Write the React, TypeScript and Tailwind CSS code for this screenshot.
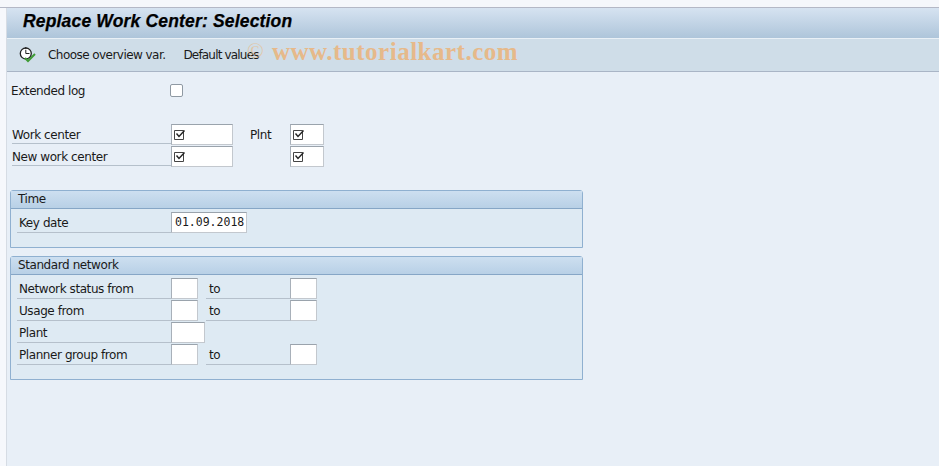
const sans = "font-['Tahoma','DejaVu_Sans',sans-serif] text-[12px] tracking-[-0.42px] text-[#1a1a1a]";

function Label({ w, children, className = "" }: { w: string; children?: React.ReactNode; className?: string }) {
  return (
    <div className={`${w} h-[20px] border-b border-[#b5c0cb] leading-[18px] whitespace-nowrap ${className}`}>{children}</div>
  );
}

function Field({ w, children, className = "" }: { w: string; children?: React.ReactNode; className?: string }) {
  return (
    <div className={`${w} h-[21px] bg-white border border-[#c3c8ce] border-t-[#9aa3ac] border-l-[#a8b0b9] flex items-center shrink-0 ${className}`}>
      {children}
    </div>
  );
}

function Check() {
  return (
    <svg width="14" height="14" viewBox="0 0 14 14" className="ml-[1px]">
      <path d="M1.5 2.5H10.5V11.5H1.5Z" fill="none" stroke="#444" strokeWidth="1" />
      <path d="M3.5 5.5L6 8.5L11.5 2.5" fill="none" stroke="#222" strokeWidth="1.4" />
    </svg>
  );
}

function Group({ title, h, children }: { title: string; h: string; children: React.ReactNode }) {
  return (
    <div className={`w-[573px] ${h} border border-[#8fb0d0] rounded-t-[3px] bg-[#deeaf3] flex flex-col`}>
      <div className="h-[18px] shrink-0 border-b border-[#86a6c6] bg-gradient-to-b from-[#cddff0] to-[#b8d0e6] pl-[7px] leading-[16px]">
        {title}
      </div>
      {children}
    </div>
  );
}

function RangeRow({ label, to = true, wide = false }: { label: string; to?: boolean; wide?: boolean }) {
  return (
    <div className="h-[22px] flex items-start pl-[6px]">
      <Label w="w-[154px]" className="pt-[2px] pl-[2px] h-[21px]">{label}</Label>
      <Field w={wide ? "w-[34px]" : "w-[27px]"} />
      {to && (
        <>
          <Label w="w-[84px]" className="ml-[8px] pt-[2px] h-[21px] pl-[3px]">to</Label>
          <Field w="w-[27px]" />
        </>
      )}
    </div>
  );
}

export default function App() {
  return (
    <div className={`w-[939px] h-[466px] overflow-hidden bg-[#f6f8fc] flex flex-col ${sans}`}>
      <div className="h-[8px] shrink-0 bg-[#f5f7fb] border-b border-[#b4b8c6]" />
      <div className="flex-1 flex min-h-0">
        <div className="w-[6px] shrink-0" />
        <div className="flex-1 flex flex-col border-l border-[#d6dce4] bg-[#e8eff7]">
          <div className="h-[31px] shrink-0 border-b border-[#e9f0f6] bg-gradient-to-b from-[#d6e3f1] to-[#aec5da] pl-[16px] font-['Liberation_Sans',sans-serif] font-bold italic text-[17.5px] tracking-[0.17px] leading-[27px] [-webkit-text-stroke:0.25px_black] text-black">
            Replace Work Center: Selection
          </div>
          <div className="relative h-[33px] shrink-0 bg-[#cfdde8] border-b border-[#a9b5c6] flex items-center pl-[12px] pb-[1px]">
            <svg width="18" height="18" viewBox="0 0 18 18" className="mr-[11px] shrink-0">
              <circle cx="6.8" cy="7.5" r="5.5" fill="#fff" stroke="#222" strokeWidth="1.3" />
              <path d="M6.8 1V3M6.8 3.8V7.5H10.5" fill="none" stroke="#222" strokeWidth="1" />
              <path d="M6 12L9 15L16 8" fill="none" stroke="#3f9b35" strokeWidth="2" />
            </svg>
            <span className="tracking-[-0.55px]">Choose overview var.</span>
            <span className="ml-[18px] tracking-[-0.82px]">Default values</span>
            <span className="absolute left-[240px] top-[0px] font-['Liberation_Serif',serif] text-[22px] text-[#e8bd8c] opacity-70 leading-[24px]">©</span>
            <span className="absolute left-[265px] top-[-1px] font-['Liberation_Serif',serif] font-bold text-[25px] tracking-[0.5px] text-[#e6b98a] leading-[28px] whitespace-nowrap">
              www.tutorialkart.com
            </span>
          </div>
          <div className="flex flex-col pl-[3px] pt-[11px]">
            <div className="h-[15px] flex items-center pl-[1px]">
              <div className="w-[159px]">Extended log</div>
              <div className="w-[13px] h-[13px] bg-white border border-[#8f99a3] rounded-[2px]" />
            </div>
            <div className="h-[26px]" />
            <div className="h-[22px] flex items-start pl-[2px]">
              <Label w="w-[159px]" className="pt-[2px] h-[20px]">Work center</Label>
              <Field w="w-[62px]"><Check /></Field>
              <div className="w-[57px] pl-[17px] pt-[2px]">Plnt</div>
              <Field w="w-[34px]"><Check /></Field>
            </div>
            <div className="h-[22px] flex items-start pl-[2px]">
              <Label w="w-[159px]" className="pt-[2px] h-[20px]">New work center</Label>
              <Field w="w-[62px]"><Check /></Field>
              <div className="w-[57px]" />
              <Field w="w-[34px]"><Check /></Field>
            </div>
            <div className="h-[22px]" />
            <Group title="Time" h="h-[58px]">
              <div className="flex items-start pl-[6px] pt-[3px]">
                <Label w="w-[154px]" className="pt-[2px] pl-[2px] h-[21px]">Key date</Label>
                <Field w="w-[76px]">
                  <span className="pl-[3px] font-['DejaVu_Sans_Mono','Liberation_Mono',monospace] text-[11.5px] tracking-[0px]">01.09.2018</span>
                </Field>
              </div>
            </Group>
            <div className="h-[8px]" />
            <Group title="Standard network" h="h-[124px]">
              <div className="flex flex-col pt-[3px]">
                <RangeRow label="Network status from" />
                <RangeRow label="Usage from" />
                <RangeRow label="Plant" to={false} wide />
                <RangeRow label="Planner group from" />
              </div>
            </Group>
          </div>
        </div>
      </div>
    </div>
  );
}
